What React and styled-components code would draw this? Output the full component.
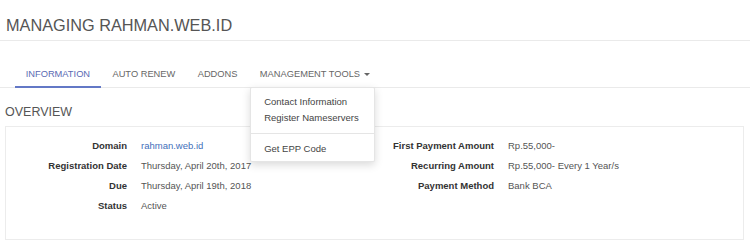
import React from "react";
import styled, { createGlobalStyle } from "styled-components";

const Global = createGlobalStyle`
  html, body { margin: 0; padding: 0; background: #fff; }
  body { font-family: "Liberation Sans", Arial, sans-serif; color: #555; }
  * { box-sizing: border-box; }
`;

const Page = styled.div`
  width: 750px;
`;

const Header = styled.div`
  padding: 15px 6px 5px 6px;
  border-bottom: 1px solid #eaeaea;
`;

const Title = styled.h1`
  margin: 0;
  font-size: 16.3px;
  line-height: 20px;
  font-weight: 400;
  color: #555;
`;

const Tabs = styled.ul`
  list-style: none;
  margin: 14px 0 0 0;
  padding: 0 0 0 14.5px;
  display: flex;
  border-bottom: 1px solid #eaeaea;
`;

const Tab = styled.li`
  position: relative;
  margin-bottom: -1px;
  padding: 13px 11.2px 5px;
  font-size: 9.3px;
  line-height: 13px;
  color: ${(p) => (p.$active ? "#5a6ab3" : "#666")};
  border-bottom: 2px solid ${(p) => (p.$active ? "#6378c6" : "transparent")};
  white-space: nowrap;
  display: flex;
  align-items: center;
`;

const Caret = styled.span`
  display: inline-block;
  width: 0;
  height: 0;
  margin-left: 4px;
  border-left: 3px solid transparent;
  border-right: 3px solid transparent;
  border-top: 3px solid #666;
`;

const Menu = styled.ul`
  position: absolute;
  top: calc(100% + 1px);
  left: 1.5px;
  width: 125px;
  margin: 0;
  padding: 5.5px 0 4.5px;
  list-style: none;
  background: #fff;
  border: 1px solid rgba(0, 0, 0, 0.1);
  border-radius: 2px;
  box-shadow: 0 3px 8px rgba(0, 0, 0, 0.15);
  z-index: 10;
`;

const MenuItem = styled.li`
  padding: 0 13px;
  font-size: 9.5px;
  line-height: 16px;
  color: #444;
`;

const Divider = styled.li`
  height: 1px;
  margin: 7px 0 7px;
  background: #e5e5e5;
`;

const Body = styled.div`
  padding: 0 6px 0 5px;
`;

const SectionTitle = styled.h2`
  margin: 16.5px 0 6.5px;
  font-size: 12.5px;
  line-height: 15px;
  font-weight: 400;
  color: #555;
`;

const Panel = styled.div`
  border: 1px solid #ececec;
  padding: 9px 3px 23px 0;
  display: grid;
  grid-template-columns: 1fr 1fr;
`;

const Column = styled.div`
  display: grid;
  grid-template-columns: 121px 1fr;
  column-gap: 14px;
  align-content: start;
`;

const Label = styled.div`
  text-align: right;
  font-weight: 700;
  font-size: 9.5px;
  line-height: 20px;
  color: #333;
  white-space: nowrap;
`;

const Value = styled.div`
  font-size: 9.5px;
  line-height: 20px;
  color: #555;
  white-space: nowrap;
`;

const Link = styled.a`
  color: #3f6fba;
  text-decoration: none;
`;

const left = [
  ["Domain", <Link href="#">rahman.web.id</Link>],
  ["Registration Date", "Thursday, April 20th, 2017"],
  ["Due", "Thursday, April 19th, 2018"],
  ["Status", "Active"],
];

const right = [
  ["First Payment Amount", "Rp.55,000-"],
  ["Recurring Amount", "Rp.55,000- Every 1 Year/s"],
  ["Payment Method", "Bank BCA"],
];

export default function App() {
  return (
    <Page>
      <Global />
      <Header>
        <Title>MANAGING RAHMAN.WEB.ID</Title>
      </Header>
      <Tabs>
        <Tab $active>INFORMATION</Tab>
        <Tab>AUTO RENEW</Tab>
        <Tab>ADDONS</Tab>
        <Tab>
          MANAGEMENT TOOLS
          <Caret />
          <Menu>
            <MenuItem>Contact Information</MenuItem>
            <MenuItem>Register Nameservers</MenuItem>
            <Divider />
            <MenuItem>Get EPP Code</MenuItem>
          </Menu>
        </Tab>
      </Tabs>
      <Body>
        <SectionTitle>OVERVIEW</SectionTitle>
        <Panel>
          <Column>
            {left.map(([l, v]) => (
              <React.Fragment key={l}>
                <Label>{l}</Label>
                <Value>{v}</Value>
              </React.Fragment>
            ))}
          </Column>
          <Column>
            {right.map(([l, v]) => (
              <React.Fragment key={l}>
                <Label>{l}</Label>
                <Value>{v}</Value>
              </React.Fragment>
            ))}
          </Column>
        </Panel>
      </Body>
    </Page>
  );
}
